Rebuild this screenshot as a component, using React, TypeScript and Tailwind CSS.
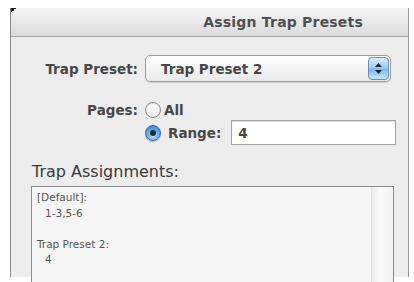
import React from 'react';

const font = { fontFamily: '"DejaVu Sans", "Liberation Sans", sans-serif' };

const Radio: React.FC<{ checked?: boolean }> = ({ checked }) =>
  checked ? (
    <span className="relative inline-flex h-[16px] w-[16px] items-center justify-center rounded-full border border-[#3d6fa8] bg-[radial-gradient(circle_at_50%_70%,#bfe3ff_0%,#6aaee8_45%,#2f6fc0_100%)] shadow-[0_1px_1px_rgba(0,0,0,0.25)]">
      <span className="h-[6px] w-[6px] rounded-full bg-[#1c2a3a]" />
    </span>
  ) : (
    <span className="inline-block h-[16px] w-[16px] rounded-full border border-[#8d8d8d] bg-[linear-gradient(#ffffff,#e9e9e9)] shadow-[inset_0_1px_1px_rgba(0,0,0,0.15)]" />
  );

const Stepper: React.FC = () => (
  <span className="flex h-[23px] w-[21px] flex-col items-center justify-center gap-[3px] rounded-[4px] border border-[#6a90c0] bg-[linear-gradient(#e0f0ff,#9ccaf4_45%,#7db8f0_55%,#c8e6ff)]">
    <svg width="7" height="4" viewBox="0 0 7 4"><path d="M3.5 0L7 4H0z" fill="#1e2a38" /></svg>
    <svg width="7" height="4" viewBox="0 0 7 4"><path d="M0 0h7L3.5 4z" fill="#1e2a38" /></svg>
  </span>
);

export default function App() {
  return (
    <div className="h-[282px] w-[414px] overflow-hidden bg-white" style={font}>
      <div className="ml-[10px] mt-[8px] flex h-[269px] w-[399px] flex-col border-l border-r border-l-[#8a8a8a] border-r-[#9a9a9a] border-r-dotted bg-[#ededed]">
        {/* title bar */}
        <div className="relative flex h-[29px] shrink-0 items-center justify-end border-b border-[#a9a9a9] bg-[linear-gradient(#f6f6f6,#e6e6e6_60%,#dadada)] pr-[45px]">
          <span className="absolute left-0 top-0 h-[5px] w-[5px] bg-[linear-gradient(135deg,#222_50%,transparent_50%)]" />
          <span className="text-[14px] font-bold tracking-[0.2px] text-[#505050]">Assign Trap Presets</span>
        </div>

        {/* body */}
        <div className="flex flex-col text-[13.5px] font-bold leading-[20px] text-[#474747]">
          <div className="mt-[18px] flex items-center">
            <span className="w-[128px] pr-[1px] text-right">Trap Preset:</span>
            <div className="ml-[6px] flex h-[27px] w-[246px] items-center justify-between rounded-[5px] border border-[#9c9c9c] bg-[linear-gradient(#ffffff,#f4f4f4_50%,#eaeaea)] pl-[15px] pr-[1px] shadow-[0_1px_1px_rgba(0,0,0,0.12)]">
              <span>Trap Preset 2</span>
              <Stepper />
            </div>
          </div>

          <div className="mt-[18px] flex items-center">
            <span className="w-[128px] pr-[1px] text-right">Pages:</span>
            <span className="ml-[6px] flex items-center gap-[3px]">
              <Radio />
              <span>All</span>
            </span>
          </div>

          <div className="flex items-center">
            <span className="ml-[134px] flex items-center gap-[7px]">
              <Radio checked />
              <span>Range:</span>
            </span>
            <div className="ml-[10px] flex h-[25px] w-[165px] items-center border border-[#a3a3a3] bg-white pl-[6px] shadow-[inset_0_1px_1px_rgba(0,0,0,0.15)]">
              <span>4</span>
            </div>
          </div>

          <span className="ml-[21px] mt-[17px] text-[16px] font-normal leading-[20px] text-[#3a3a3a]">Trap Assignments:</span>

          <div className="ml-[20px] mt-[4px] flex h-[100px] w-[363px] border border-[#8c8c8c] bg-[#f6f6f6]">
            <div className="flex flex-1 flex-col pl-[5px] pt-[3px] text-[10.5px] font-normal leading-[15.5px] text-[#555]">
              <span>[Default]:</span>
              <span className="pl-[8px]">1-3,5-6</span>
              <span className="h-[15.5px]" />
              <span>Trap Preset 2:</span>
              <span className="pl-[8px]">4</span>
            </div>
            <div className="w-[22px] border-l border-[#e2e2e2] bg-[linear-gradient(90deg,#ececec,#fafafa_40%,#f1f1f1)]" />
          </div>
        </div>
      </div>
    </div>
  );
}
